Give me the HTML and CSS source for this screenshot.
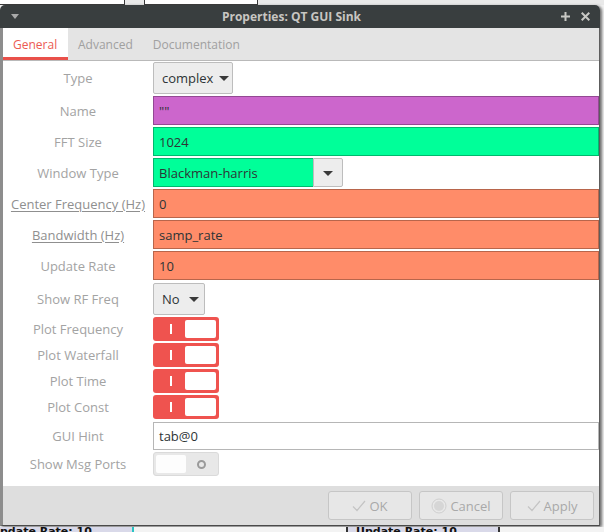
FILE: index.html
```html
<!DOCTYPE html>
<html>
<head>
<meta charset="utf-8">
<link rel="stylesheet" href="styles.css">
</head>
<body>
<div class="top-strip">
  <div class="bgwin w1"></div>
  <div class="bgwin w2"></div>
</div>
<div class="dialog">
  <div class="titlebar">
    <svg class="menu-tri" width="8" height="5" viewBox="0 0 8 5"><path d="M0 0 L8 0 L4 5 Z" fill="#a9aaaa"/></svg>
    <span class="title">Properties: QT GUI Sink</span>
    <span class="wbtns">
      <svg width="9" height="9" viewBox="0 0 9 9"><path d="M4.5 0 V9 M0 4.5 H9" stroke="#c8c8c4" stroke-width="2"/></svg>
      <svg width="9" height="9" viewBox="0 0 9 9"><path d="M0.7 0.7 L8.3 8.3 M8.3 0.7 L0.7 8.3" stroke="#c8c8c4" stroke-width="2"/></svg>
    </span>
  </div>
  <div class="frame">
    <div class="tabs">
      <div class="tab active">General</div>
      <div class="tab">Advanced</div>
      <div class="tab">Documentation</div>
    </div>
    <div class="content">
      <div class="label">Type</div>
      <div class="cell"><div class="combo combo-type">complex <span class="arrow"></span></div></div>

      <div class="label">Name</div>
      <div class="cell"><div class="field f-string">""</div></div>

      <div class="label">FFT Size</div>
      <div class="cell"><div class="field f-int">1024</div></div>

      <div class="label">Window Type</div>
      <div class="cell"><div class="entry-combo"><div class="field f-int ec-field">Blackman-harris</div><div class="ec-btn"><span class="arrow"></span></div></div></div>

      <div class="label"><span class="ul">Center Frequency (Hz)</span></div>
      <div class="cell"><div class="field f-real">0</div></div>

      <div class="label"><span class="ul">Bandwidth (Hz)</span></div>
      <div class="cell"><div class="field f-real">samp_rate</div></div>

      <div class="label">Update Rate</div>
      <div class="cell"><div class="field f-real">10</div></div>

      <div class="label mt1">Show RF Freq</div>
      <div class="cell mt1"><div class="combo combo-no">No <span class="arrow"></span></div></div>

      <div class="label">Plot Frequency</div>
      <div class="cell"><div class="toggle on"><span class="bar"></span><span class="knob"></span></div></div>

      <div class="label">Plot Waterfall</div>
      <div class="cell"><div class="toggle on"><span class="bar"></span><span class="knob"></span></div></div>

      <div class="label">Plot Time</div>
      <div class="cell"><div class="toggle on"><span class="bar"></span><span class="knob"></span></div></div>

      <div class="label">Plot Const</div>
      <div class="cell"><div class="toggle on"><span class="bar"></span><span class="knob"></span></div></div>

      <div class="label mt1">GUI Hint</div>
      <div class="cell mt1"><div class="field f-plain hint">tab@0</div></div>

      <div class="label">Show Msg Ports</div>
      <div class="cell"><div class="toggle off"><span class="knob"></span><span class="ring"></span></div></div>
    </div>
    <div class="footer">
      <div class="btn"><svg width="14" height="12" viewBox="0 0 14 12"><path d="M1 6.5 L5 10.5 L13 1" fill="none" stroke="#c4c4c4" stroke-width="1.2"/></svg>OK</div>
      <div class="btn"><svg width="16" height="16" viewBox="0 0 16 16"><circle cx="8" cy="8" r="7" fill="#e8e8e8" stroke="#cfcfcf" stroke-width="1"/><circle cx="8" cy="8" r="5" fill="#d6d6d6"/></svg>Cancel</div>
      <div class="btn"><svg width="14" height="12" viewBox="0 0 14 12"><path d="M1 6.5 L5 10.5 L13 1" fill="none" stroke="#c4c4c4" stroke-width="1.2"/></svg>Apply</div>
    </div>
  </div>
</div>
<div class="bottom-strip">
  <div class="bs-a">pdate Rate: 10</div>
  <div class="bs-b"></div>
  <div class="bs-c">Update Rate: 10</div>
</div>
</body>
</html>
```
FILE: styles.css
```css
* { box-sizing: border-box; }
html, body { margin: 0; padding: 0; }
body {
  width: 604px;
  height: 532px;
  overflow: hidden;
  background: #f2f2f2;
  font-family: "Open Sans", "Noto Sans", sans-serif;
  font-size: 13px;
}
.top-strip {
  height: 5px;
  display: flex;
  background: #e9e9e9;
}
.bgwin {
  height: 5px;
  background: #fff;
  border: 1px solid #3a3a3a;
  border-top: none;
}
.w1 { width: 126px; margin-left: -1px; }
.w2 { width: 114px; margin-left: 19px; }

.dialog {
  width: 600px;
  box-shadow: 2px 1px 3px rgba(0,0,0,0.55);
  border-radius: 5px 5px 0 0;
}
.titlebar {
  height: 23px;
  background: #393e3f;
  border-radius: 5px 5px 0 0;
  display: flex;
  align-items: center;
  position: relative;
  color: #c8c6c2;
}
.menu-tri { margin-left: 11px; }
.title {
  position: absolute;
  left: 0; right: 0;
  text-align: center;
  font-weight: bold;
  font-size: 12px;
  padding-right: 17px;
  pointer-events: none;
}
.wbtns {
  margin-left: auto;
  margin-right: 10px;
  display: flex;
  gap: 11px;
  align-items: center;
}
.frame {
  border-left: 3px solid #8d8d8d;
  border-right: 1px solid #5d5d5d;
  border-bottom: 1px solid #4a4a4a;
  background: #dedede;
}
.tabs {
  height: 33px;
  background: #e4e4e4;
  border-bottom: 1px solid #b9b9b9;
  display: flex;
  align-items: stretch;
}
.tab {
  color: #a0a0a0;
  padding: 8px 10px 0 10px;
  font-size: 12px;
}
.tab.active {
  background: #fff;
  color: #ec5a52;
  border-bottom: 3px solid #e9504a;
  width: 65px;
}
.content {
  background: #fff;
  display: grid;
  grid-template-columns: 150px 1fr;
  row-gap: 2px;
  padding: 1px 0 10px 0;
  align-items: center;
}
.mt1 { margin-top: 1px; }
.label {
  text-align: center;
  color: #a3a3a3;
  font-size: 13px;
}
.ul {
  color: #8f8f8f;
  text-decoration: underline;
  text-underline-offset: 2px;
}
.cell { display: flex; }
.field {
  height: 29px;
  flex: 1;
  border: 1px solid rgba(0,0,0,0.28);
  padding-left: 5px;
  display: flex;
  align-items: center;
  color: #2e3436;
  font-size: 13px;
}
.f-string { background: #cc66cc; }
.f-int { background: #00ff99; }
.f-real { background: #ff8c69; }
.f-plain { background: #fff; border-color: #b6b6b6; height: 28px; }
.hint { margin-right: 0; }

.combo {
  height: 32px;
  background: #ededed;
  border: 1px solid #bdbdbd;
  border-radius: 2px;
  display: flex;
  align-items: center;
  color: #2e3436;
  padding-left: 8px;
}
.combo-type { width: 80px; }
.combo-no { width: 52px; padding-left: 8px; }
.arrow {
  display: inline-block;
  width: 0; height: 0;
  border-left: 5px solid transparent;
  border-right: 5px solid transparent;
  border-top: 5px solid #3a3a3a;
  margin-left: 6px;
  margin-top: 1px;
}
.combo-no .arrow { margin-left: 9px; }
.entry-combo {
  display: flex;
  height: 29px;
  width: 190px;
}
.ec-field { flex: 0 0 160px; border-right: none; }
.ec-btn {
  flex: 1;
  background: #ededed;
  border: 1px solid #bdbdbd;
  border-radius: 0 2px 2px 0;
  display: flex;
  align-items: center;
  justify-content: center;
}
.ec-btn .arrow { margin: 1px 0 0 0; }

.toggle {
  width: 66px;
  height: 24px;
  border-radius: 3px;
  display: flex;
  align-items: center;
}
.toggle.on {
  background: #ef534f;
  padding: 3px;
}
.toggle.on .bar {
  width: 2px;
  height: 10px;
  background: #fff;
  margin-left: 14px;
}
.toggle.on .knob {
  margin-left: auto;
  width: 31px;
  height: 18px;
  background: #fff;
  border-radius: 2px;
}
.toggle.off {
  background: #e8e8e8;
  border: 1px solid #dadada;
  padding: 2px;
}
.toggle.off .knob {
  width: 30px;
  height: 18px;
  background: #fdfdfd;
  border-radius: 2px;
}
.toggle.off .ring {
  width: 9px;
  height: 9px;
  border: 2px solid #9a9a9a;
  border-radius: 50%;
  margin-left: 11px;
}

.footer {
  height: 39px;
  background: #dedede;
  display: flex;
  justify-content: flex-end;
  gap: 7px;
  padding: 5px 5px 0 0;
}
.btn {
  width: 84px;
  height: 29px;
  border: 1px solid #c6c6c6;
  border-radius: 3px;
  background: #e7e7e7;
  color: #a9a9a9;
  font-size: 13px;
  display: flex;
  align-items: center;
  justify-content: center;
  gap: 3px;
}
.bottom-strip {
  height: 6px;
  display: flex;
  background: #f3f3f3;
  overflow: hidden;
  margin-top: 1px;
  font-family: "DejaVu Sans", sans-serif;
  font-weight: bold;
  font-size: 11px;
  line-height: 10px;
}
.bs-a {
  width: 134px;
  background: #d9d9e9;
  border-right: 2px solid #29c4c4;
  color: #111;
}
.bs-b { width: 214px; background: #f3f3f3; border-right: 2px solid #333; }
.bs-c {
  width: 152px;
  background: #d9d9e9;
  border-right: 2px solid #333;
  padding-left: 8px;
  color: #111;
}
```
